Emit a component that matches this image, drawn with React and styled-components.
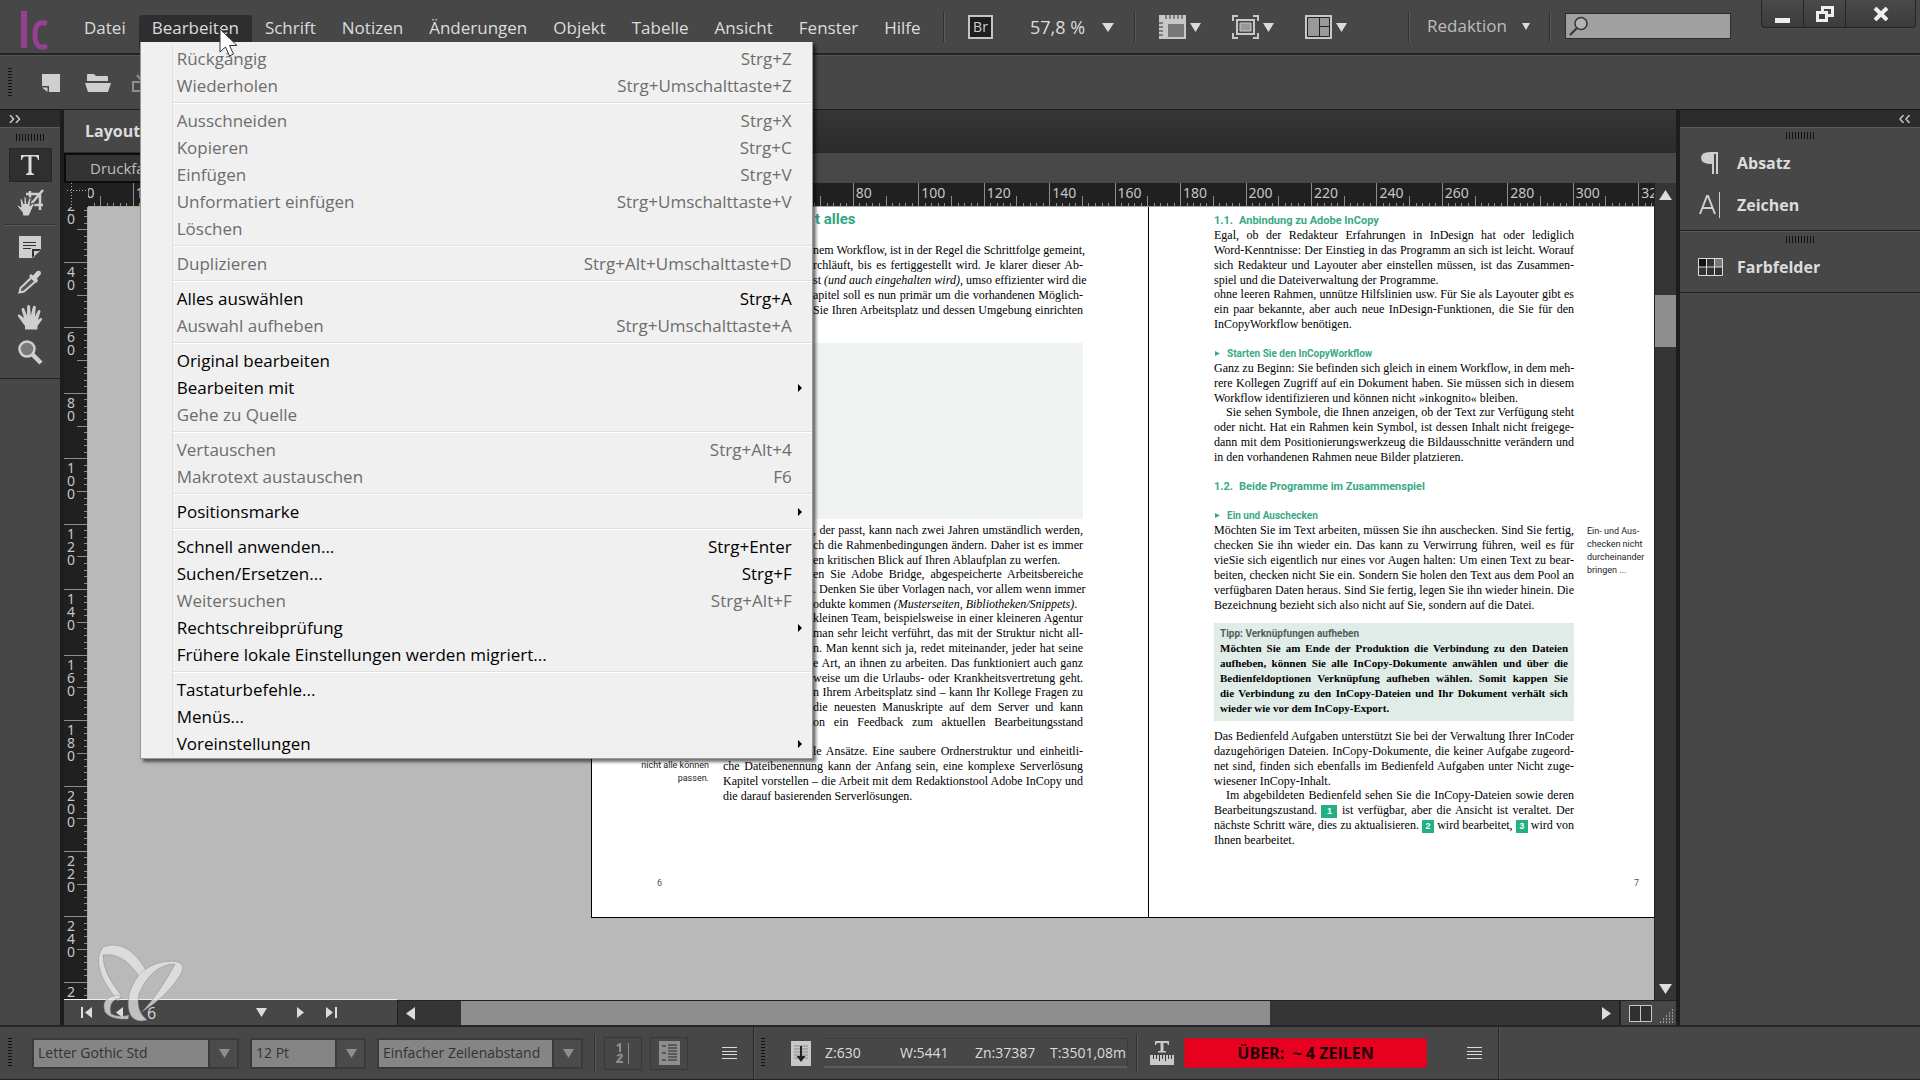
import { Fragment } from 'react';
import styled, { createGlobalStyle } from 'styled-components';

const GlobalStyle = createGlobalStyle`
  * {
    box-sizing: border-box;
  }

  body {
    margin: 0;
    overflow: hidden;
    background: #474747;
    color: #dcdcdc;
    font: 16px/24px 'Open Sans', 'Noto Sans', sans-serif;
  }

  button, input, select {
    font: inherit;
    color: inherit;
    background: none;
    border: none;
    border-radius: 0;
    padding: 0;
    margin: 0;
  }

  svg {
    display: block;
    flex: none;
  }

  p, h1, h2, h3 {
    margin: 0;
  }
`;

/* ---------- window ---------- */

const Window = styled.div`
  height: 100vh;
  display: flex;
  flex-direction: column;
`;

const Separator = styled.div`
  width: 2px;
  height: ${({ $height }) => $height || 30}px;
  background: linear-gradient(to right, #303030 50%, #5a5a5a 50%);
`;

const Grip = styled.div`
  width: 4px;
  height: 30px;
  background: repeating-linear-gradient(#111 0 1px, transparent 1px 3px);
`;

const PanelGrip = styled.div`
  width: 28px;
  height: 7px;
  margin: 0 auto;
  background: repeating-linear-gradient(to right, #111 0 1px, transparent 1px 3px);
`;

const IconButton = styled.button`
  display: flex;
  align-items: center;
  gap: ${({ $gap }) => $gap || 0}px;
`;

/* ---------- top bar ---------- */

const TopBar = styled.header`
  height: 55px;
  flex: none;
  display: flex;
  align-items: flex-start;
  border-bottom: 2px solid #242424;
  position: relative;
  z-index: 2;
  font-size: 17px;
`;

const Logo = styled.div`
  padding: 9px 0 0 19px;
  width: 71px;
`;

const MenuNav = styled.nav`
  display: flex;
  padding-top: 15px;
  flex: 0 0 872px;
`;

const MenuItem = styled.div`
  position: relative;
`;

const MenuButton = styled.button`
  height: 36px;
  padding: 0 13px 10px;
  line-height: 26px;
  white-space: nowrap;
  border-radius: 3px;
  background: ${({ $open }) => ($open ? '#2e2e2e' : 'none')};
`;

const Dropdown = styled.div`
  position: absolute;
  top: 27px;
  left: 1px;
  width: 673px;
  padding: 3px 0 1px;
  background: #f0f0f0;
  border: 1px solid #979797;
  border-width: 0 1px 1px;
  box-shadow: 3px 3px 3px rgba(0, 0, 0, 0.55);
  color: #000;
`;

const MenuGroup = styled.div`
  margin-left: 31px;
  border-left: 1px solid #e0e0e0;

  & + & {
    padding-top: 8px;
    background: linear-gradient(#e0e0e0 0 1px, #fff 1px 2px, transparent 2px) 0 3px no-repeat;
  }
`;

const MenuRow = styled.button`
  display: flex;
  justify-content: space-between;
  align-items: center;
  width: 100%;
  height: 27px;
  padding: 0 ${({ $sub }) => ($sub ? 10 : 20)}px 0 4px;
  color: ${({ disabled }) => (disabled ? '#6d6d6d' : '#000')};
`;

const Cursor = styled.div`
  position: absolute;
  left: 219px;
  top: 28px;
`;

const TopTools = styled.div`
  flex: 1;
  display: flex;
  align-items: center;
  height: 54px;
`;

const BridgeButton = styled.button`
  width: 25px;
  height: 24px;
  margin: 0 37px 0 23px;
  border: 2px solid #c4c4c4;
  background: #1e1e1e;
  color: #d0d0d0;
  font-size: 14px;
  line-height: 20px;
`;

const ZoomButton = styled.button`
  display: flex;
  align-items: center;
  justify-content: space-between;
  width: 84px;
  margin-right: 20px;
  font-size: 18px;
  white-space: nowrap;
`;

const ViewTools = styled.div`
  display: flex;
  gap: 31px;
  width: 272px;
  padding-left: 23px;
`;

const WorkspaceButton = styled.button`
  display: flex;
  align-items: center;
  justify-content: space-between;
  width: 103px;
  margin: 0 19px 2px 17px;
  color: #bdbdbd;
`;

const SearchField = styled.label`
  display: flex;
  align-items: center;
  width: 166px;
  height: 26px;
  margin: 0 0 2px 14px;
  padding: 0 3px;
  background: #a0a0a0;
  border: 1px solid #2c2c2c;

  input {
    flex: 1;
    min-width: 0;
    color: #222;
  }
`;

const WindowButtons = styled.div`
  display: flex;
  align-self: flex-start;
  width: 155px;
  height: 28px;
  margin: 0 4px 0 auto;
  border: 1px solid #262626;
  border-top: none;
  border-radius: 0 0 4px 4px;
  background: linear-gradient(#4a4a4a, #3b3b3b);
`;

const WindowButton = styled.button`
  flex: ${({ $grow }) => $grow || 42};
  display: grid;
  place-items: center;

  & + & {
    border-left: 1px solid #262626;
  }
`;

/* ---------- control bar ---------- */

const ControlBar = styled.div`
  height: 54px;
  flex: none;
  display: flex;
  align-items: center;
  padding-left: 8px;
  border-top: 1px solid #555;

  ${Grip} {
    margin-right: 30px;
  }

  svg {
    margin-right: 25px;
  }
`;

/* ---------- docks ---------- */

const Workspace = styled.main`
  flex: 1;
  min-height: 0;
  display: flex;
  background: #1d1d1d;
`;

const Dock = styled.aside`
  flex: 0 0 ${({ $width }) => $width}px;
  background: #474747;
  border-top: 1px solid #1a1a1a;
`;

const DockHeader = styled.div`
  display: flex;
  justify-content: ${({ $end }) => ($end ? 'flex-end' : 'flex-start')};
  align-items: center;
  height: 17px;
  padding: 0 9px;
  background: #2c2c2c;
`;

const Toolbox = styled.div`
  display: flex;
  flex-direction: column;
  align-items: center;
  gap: 7px;
  padding: 6px 0 12px;
  border-top: 1px solid #5a5a5a;
  border-bottom: 1px solid #222;
`;

const ToolButton = styled.button`
  width: 43px;
  height: ${({ $active }) => ($active ? 34 : 28)}px;
  display: grid;
  place-items: center;
  background: ${({ $active }) => ($active ? '#2f2f2f' : 'none')};
  border: ${({ $active }) => ($active ? '1px solid #262626' : 'none')};
`;

const ToolRule = styled.div`
  width: 52px;
  height: 2px;
  background: linear-gradient(#333 50%, #5a5a5a 50%);
`;

const PanelGroup = styled.section`
  padding: 4px 0;
  border-top: 1px solid #5a5a5a;
  border-bottom: 1px solid #1f1f1f;
`;

const PanelList = styled.div`
  display: flex;
  flex-direction: column;
  padding-top: 3px;
`;

const PanelButton = styled.button`
  display: flex;
  align-items: center;
  height: 42px;
  padding-left: 18px;
  font-weight: 700;

  svg {
    width: 26px;
    margin-right: 13px;
  }
`;

/* ---------- document area ---------- */

const DocumentArea = styled.section`
  flex: 1;
  min-width: 0;
  display: flex;
  flex-direction: column;
  margin: 1px 4px 0;
  background: #474747;
`;

const TabStrip = styled.div`
  flex: 0 0 43px;
  background: linear-gradient(#363636, #2b2b2b);
`;

const DocTab = styled.button`
  width: 300px;
  height: 42px;
  padding-left: 21px;
  text-align: left;
  font-weight: 700;
  background: #474747;
`;

const ViewStrip = styled.div`
  flex: 0 0 30px;
  background: #484848;
`;

const ViewTab = styled.button`
  width: 200px;
  height: 30px;
  padding-left: 24px;
  text-align: left;
  font-size: 15px;
  color: #bdbdbd;
  background: #333;
  border: 2px solid #0c0c0c;
`;

const Viewport = styled.div`
  flex: 1;
  min-height: 0;
  display: grid;
  grid-template: 24px minmax(0, 1fr) 25px / 24px minmax(0, 1fr) 22px;
`;

const RulerBox = styled.div`
  background: #202020;
  overflow: hidden;
  border: solid #a8a8a8;
  border-width: ${({ $vertical }) => ($vertical ? '0 1px 0 0' : '0 0 1px 0')};

  text {
    font: 14px 'Noto Sans', sans-serif;
    fill: #c6c6c6;
  }
`;

const RulerCorner = styled.div`
  background: #202020;

  svg {
    margin-left: 3px;
  }
`;

const Canvas = styled.div`
  display: flex;
  padding: 0 0 82px 503px;
  overflow: hidden;
  background: #b9b9b9;
`;

const Page = styled.article`
  flex: ${({ $fill }) => ($fill ? '1 0 0' : '0 0 557px')};
  min-width: 0;
  display: flex;
  flex-direction: column;
  padding-top: ${({ $fill }) => ($fill ? 6 : 2)}px;
  background: #fff;
  border: solid #000;
  border-width: 0 0 1px 1px;
  color: #000;
  font: 12px/15px 'Liberation Serif', serif;
  overflow: hidden;
`;

const Section = styled.div`
  display: grid;
  grid-template-columns: ${({ $mirrored }) => ($mirrored ? '65px 360px 1fr' : '117px 360px')};
  column-gap: ${({ $mirrored }) => ($mirrored ? 0 : 14)}px;
`;

const Column = styled.div`
  grid-column: 2;
`;

const Para = styled.p`
  padding-left: ${({ $tail }) => ($tail ? 90 : 0)}px;

  & + & {
    margin-top: -1px;
  }
`;

const Line = styled.span`
  display: block;
  white-space: nowrap;
  text-align: justify;
  text-align-last: ${({ $end }) => ($end ? 'left' : 'justify')};
  padding-left: ${({ $indent }) => ($indent ? 12 : 0)}px;
`;

const Gap = styled.div`
  height: ${({ $size }) => $size || 14}px;
`;

const Title = styled.h1`
  padding-left: 92px;
  color: #2fa883;
  font: 700 15px/20px Roboto, 'Liberation Sans', sans-serif;
`;

const Heading = styled.h2`
  display: flex;
  align-items: center;
  gap: 6px;
  color: #3aa986;
  font: 700 ${({ $sub }) => ($sub ? 10 : 11)}px/15px Roboto, 'Liberation Sans', sans-serif;
`;

const Marker = styled.span`
  flex: 0 0 19px;
`;

const PictureFrame = styled.div`
  height: 176px;
  background: #eff4f2;
`;

const Note = styled.aside`
  color: #222;
  font: 9px/13px Roboto, 'Liberation Sans', sans-serif;
  white-space: nowrap;
  padding: ${({ $mirrored }) => ($mirrored ? '2px 0 0 13px' : '0')};
  text-align: ${({ $mirrored }) => ($mirrored ? 'left' : 'right')};
`;

const Tip = styled.div`
  padding: 3px 6px 5px;
  background: #e0ece7;
  font-size: 11px;
  font-weight: 700;

  h3 {
    color: #50605a;
    font: 700 10px/15px Roboto, 'Liberation Sans', sans-serif;
  }
`;

const Tag = styled.span`
  display: inline-block;
  width: ${({ $wide }) => ($wide ? 16 : 12)}px;
  height: 13px;
  background: #22b183;
  color: #fff;
  font: 700 9px/13px 'Liberation Sans', sans-serif;
  text-align: center;
  text-align-last: center;
`;

const PageNumber = styled.footer`
  margin-top: auto;
  padding: 0 15px 27px 65px;
  color: #555;
  font: 9px/13px Roboto, 'Liberation Sans', sans-serif;
  text-align: ${({ $right }) => ($right ? 'right' : 'left')};
`;

const VerticalScroll = styled.div`
  grid-row: 1 / 3;
  grid-column: 3;
  display: flex;
  flex-direction: column;
  align-items: center;
  justify-content: space-between;
  padding: 7px 0 6px;
  background: #353535;
  border-left: 1px solid #222;
`;

const VerticalThumb = styled.div`
  width: 21px;
  height: 52px;
  margin: 95px 0 auto;
  background: #8e8e8e;
`;

const NavRow = styled.div`
  grid-column: 1 / 4;
  display: flex;
  align-items: stretch;
  border-top: 1px solid #222;
`;

const PageNav = styled.div`
  flex: 0 0 333px;
  display: flex;
  align-items: center;
  padding-left: 17px;
  border-top: 1px solid #eee;
  margin-top: -2px;
  background: #474747;
`;

const PageField = styled.input`
  width: 109px;
  margin-left: 21px;
`;

const HorizontalScroll = styled.div`
  flex: 1;
  display: flex;
  align-items: center;
  background: #353535;
  border: 1px solid #222;
  border-width: 0 2px 0 1px;
  padding: 0 8px;
`;

const HorizontalThumb = styled.div`
  flex: 0 0 809px;
  align-self: stretch;
  margin: 0 auto 0 46px;
  background: #8e8e8e;
`;

const SplitButton = styled.button`
  padding: 0 8px;
`;

/* ---------- bottom bar ---------- */

const BottomBar = styled.footer`
  height: 55px;
  flex: none;
  display: flex;
  align-items: center;
  padding-left: 8px;
  border-top: 2px solid #262626;
  border-bottom: 1px solid #222;
  font-size: 14px;

  & > ${Grip} {
    margin-right: 20px;
  }
`;

const Spacer = styled.div`
  width: ${({ $width }) => $width}px;
`;

const SelectBox = styled.label`
  position: relative;
  width: ${({ $width }) => $width}px;
  margin-right: 11px;
  border: 2px solid #3a3a3a;

  select {
    width: 100%;
    height: 27px;
    padding-left: 4px;
    appearance: none;
    color: #333;
    background: linear-gradient(to left, #4b4b4b 27px, #3a3a3a 27px 29px, #858585 29px);
  }

  svg {
    position: absolute;
    right: 7px;
    top: 9px;
    pointer-events: none;
  }
`;

const ToggleButton = styled.button`
  width: 38px;
  height: 33px;
  margin-left: 8px;
  display: grid;
  place-items: center;
  border: 1px solid #383838;
`;

const BarDivider = styled.div`
  align-self: stretch;
  width: 2px;
  background: linear-gradient(to right, #262626 50%, #555 50%);
`;

const Metrics = styled.dl`
  display: grid;
  grid-template-columns: 75px 75px 75px 75px;
  width: 304px;
  height: 30px;
  margin: 0 8px 0 13px;
  padding-left: 1px;
  line-height: 28px;
  white-space: nowrap;
  overflow: hidden;
  border: solid #3c3c3c;
  border-width: 1px 1px 0 0;
  border-bottom: 2px solid #5c5c5c;

  div {
    display: flex;
  }

  dd {
    margin: 0;
  }
`;

const CopyfitStatus = styled.output`
  width: 243px;
  height: 30px;
  margin: 0 40px 0 10px;
  background: #e8001f;
  border: 1px solid #b3152a;
  color: #1c0508;
  font-size: 16px;
  font-weight: 700;
  line-height: 28px;
  text-align: center;
  white-space: pre;
`;

const Watermark = styled.div`
  position: absolute;
  left: 97px;
  bottom: 58px;
  pointer-events: none;
`;

/* ---------- icons ---------- */

const Triangle = ({ dir = 'down', w = 11, h = 9 }) => {
  const points = {
    down: `0,0 ${w},0 ${w / 2},${h}`,
    up: `0,${h} ${w},${h} ${w / 2},0`,
    left: `${w},0 ${w},${h} 0,${h / 2}`,
    right: `0,0 0,${h} ${w},${h / 2}`,
  };
  return (
    <svg width={w} height={h}>
      <polygon points={points[dir]} fill="#dcdcdc" />
    </svg>
  );
};

const Hamburger = () => (
  <svg width="15" height="12" stroke="#dcdcdc">
    <path d="M0 .5h15M0 4.5h15M0 7.5h15M0 11.5h15" />
  </svg>
);

const HandShape = ({ size = 26 }) => (
  <svg width={size} height={size} viewBox="0 0 26 26">
    <path
      d="M8 25.500V22L5 18 .8 12q-.3-2 1.700-1.500L7 14 4.500 5.500q.5-2 2.500-1.200l3 7.200L10.200 2q1.300-1.800 2.800 0l.8 9.500L16 2.500q1.700-1.500 2.800.3L18 12.500l3-6q2-1.200 2.500.8L21 16l2.500-2q2.300-.2 1.500 1.800L20.500 22v3.500z"
      fill="#cfcfcf"
    />
  </svg>
);

/* ---------- rulers ---------- */

const STEP = 65.45; // px per 20 mm

function Ruler({ vertical, origin, from, to }) {
  const marks = [];
  for (let i = from; i <= to; i++) marks.push(i);
  const tick = (pos, len) =>
    vertical ? `M${23 - len} ${pos}h${len}` : `M${pos} ${23 - len}v${len}`;

  return (
    <RulerBox $vertical={vertical}>
      <svg width="100%" height="100%" shapeRendering="crispEdges">
        {marks.map((i) => {
          const pos = origin + i * STEP;
          const label = String(Math.abs(i * 20));
          const path = [0, 1, 2, 3, 4, 5, 6, 7, 8, 9]
            .map((n) => tick(Math.round(pos + (n * STEP) / 10) + 0.5, n === 0 ? 23 : n === 5 ? 10 : 3))
            .join('');
          return (
            <Fragment key={i}>
              <path d={path} stroke="#8c8c8c" />
              {vertical
                ? label.split('').map((digit, n) => (
                    <text key={n} x="3" y={pos + 15 + n * 13}>{digit}</text>
                  ))
                : <text x={pos + 3} y="15">{label}</text>}
            </Fragment>
          );
        })}
      </svg>
    </RulerBox>
  );
}

/* ---------- data ---------- */

const MENUS = ['Datei', 'Bearbeiten', 'Schrift', 'Notizen', 'Änderungen', 'Objekt', 'Tabelle', 'Ansicht', 'Fenster', 'Hilfe'];

const EDIT_MENU = [
  [
    { label: 'Rückgängig', keys: 'Strg+Z', off: true },
    { label: 'Wiederholen', keys: 'Strg+Umschalttaste+Z', off: true },
  ],
  [
    { label: 'Ausschneiden', keys: 'Strg+X', off: true },
    { label: 'Kopieren', keys: 'Strg+C', off: true },
    { label: 'Einfügen', keys: 'Strg+V', off: true },
    { label: 'Unformatiert einfügen', keys: 'Strg+Umschalttaste+V', off: true },
    { label: 'Löschen', off: true },
  ],
  [{ label: 'Duplizieren', keys: 'Strg+Alt+Umschalttaste+D', off: true }],
  [
    { label: 'Alles auswählen', keys: 'Strg+A' },
    { label: 'Auswahl aufheben', keys: 'Strg+Umschalttaste+A', off: true },
  ],
  [
    { label: 'Original bearbeiten' },
    { label: 'Bearbeiten mit', sub: true },
    { label: 'Gehe zu Quelle', off: true },
  ],
  [
    { label: 'Vertauschen', keys: 'Strg+Alt+4', off: true },
    { label: 'Makrotext austauschen', keys: 'F6', off: true },
  ],
  [{ label: 'Positionsmarke', sub: true }],
  [
    { label: 'Schnell anwenden...', keys: 'Strg+Enter' },
    { label: 'Suchen/Ersetzen...', keys: 'Strg+F' },
    { label: 'Weitersuchen', keys: 'Strg+Alt+F', off: true },
    { label: 'Rechtschreibprüfung', sub: true },
    { label: 'Frühere lokale Einstellungen werden migriert...' },
  ],
  [
    { label: 'Tastaturbefehle...' },
    { label: 'Menüs...' },
    { label: 'Voreinstellungen', sub: true },
  ],
];

/* ---------- parts ---------- */

function Text({ lines, tail, indent, open }) {
  return (
    <Para $tail={tail}>
      {lines.map((line, i) => (
        <Line key={i} $end={!open && i === lines.length - 1} $indent={indent && i === 0}>{line}</Line>
      ))}
    </Para>
  );
}

function EditMenu() {
  return (
    <Dropdown role="menu">
      {EDIT_MENU.map((group, i) => (
        <MenuGroup key={i}>
          {group.map(({ label, keys, sub, off }) => (
            <MenuRow key={label} role="menuitem" disabled={off} $sub={sub}>
              <span>{label}</span>
              {keys && <span>{keys}</span>}
              {sub && <svg width="4" height="8"><path d="M0 0l4 4-4 4z" /></svg>}
            </MenuRow>
          ))}
        </MenuGroup>
      ))}
    </Dropdown>
  );
}

function Header() {
  return (
    <TopBar>
      <Logo>
        <svg width="30" height="42" fill="none" stroke="#96408f">
          <path d="M5 2v37" strokeWidth="6" />
          <path d="M28 14.500q-12-4-12 11.500t12 11" strokeWidth="5" />
        </svg>
      </Logo>
      <MenuNav>
        {MENUS.map((name) => (
          <MenuItem key={name}>
            <MenuButton $open={name === 'Bearbeiten'}>{name}</MenuButton>
            {name === 'Bearbeiten' && <EditMenu />}
          </MenuItem>
        ))}
      </MenuNav>
      <TopTools>
        <Separator />
        <BridgeButton>Br</BridgeButton>
        <ZoomButton>57,8 % <Triangle w={12} /></ZoomButton>
        <Separator />
        <ViewTools>
          <IconButton $gap={4} aria-label="Anzeigeoptionen">
            <svg width="27" height="24">
              <path d="M0 0h27v8H8v16H0z" fill="#c8c8c8" />
              <path d="M8 8h18v15H8z" fill="#777" stroke="#c8c8c8" strokeWidth="2" />
              <path d="M7 0v4M11 0v4M15 0v4M19 0v4M23 0v4M0 8h4M0 12h4M0 16h4M0 20h4" stroke="#333" />
            </svg>
            <Triangle />
          </IconButton>
          <IconButton $gap={4} aria-label="Bildschirmmodus">
            <svg width="27" height="24" fill="none" stroke="#c8c8c8">
              <path d="M1 6V1h5M21 1h5v5M26 18v5h-5M6 23H1v-5" strokeWidth="2" />
              <path d="M5 5h17v14H5z" strokeWidth="2" />
              <path d="M8 8h11v8H8z" fill="#999" />
            </svg>
            <Triangle />
          </IconButton>
          <IconButton $gap={4} aria-label="Dokumente anordnen">
            <svg width="27" height="24">
              <path d="M0 0h27v24H0z" fill="#c8c8c8" />
              <path d="M2.500 2.500h22v19h-22zM14.500 2.500v19M14.500 11.500h10" fill="#999" stroke="#222" />
            </svg>
            <Triangle />
          </IconButton>
        </ViewTools>
        <Separator />
        <WorkspaceButton>Redaktion <Triangle w={8} h={7} /></WorkspaceButton>
        <Separator />
        <SearchField aria-label="Suche">
          <svg width="20" height="20" fill="none" stroke="#333" strokeWidth="2">
            <circle cx="12" cy="7.500" r="6" fill="#b4b4b4" strokeWidth="1.500" />
            <path d="M8 12l-7 7" />
          </svg>
          <input type="text" />
        </SearchField>
        <WindowButtons>
          <WindowButton aria-label="Minimieren">
            <svg width="15" height="20"><path d="M0 14h15v5H0z" fill="#eee" /></svg>
          </WindowButton>
          <WindowButton aria-label="Wiederherstellen">
            <svg width="18" height="16" fill="none" stroke="#eee" strokeWidth="3">
              <path d="M6.500 6V1.500h10v8H12M1.500 6.500h9v8h-9z" />
            </svg>
          </WindowButton>
          <WindowButton $grow={70} aria-label="Schließen">
            <svg width="16" height="14"><path d="M2 1l12 12M14 1L2 13" stroke="#eee" strokeWidth="4" /></svg>
          </WindowButton>
        </WindowButtons>
      </TopTools>
      <Cursor>
        <svg width="20" height="30">
          <path d="M1 1v23l5.500-5 4 9 4-2-4-8.500H18z" fill="#fff" stroke="#333" />
        </svg>
      </Cursor>
    </TopBar>
  );
}

function Tools() {
  return (
    <Dock $width={60}>
      <DockHeader>
        <svg width="12" height="8" fill="none" stroke="#c8c8c8" strokeWidth="1.500">
          <path d="M1 0l3.500 4L1 8M7 0l3.500 4L7 8" />
        </svg>
      </DockHeader>
      <Toolbox>
        <PanelGrip />
        <ToolButton $active aria-label="Text">
          <svg width="18" height="20" fill="#dcdcdc">
            <path d="M0 0h18v5h-1q-.5-3.500-3-3.500h-3.500V17q0 1.500 2.500 1.700V20H5v-1.300q2.500-.2 2.500-1.700V1.500H4Q1.500 1.500 1 5H0z" />
          </svg>
        </ToolButton>
        <ToolButton aria-label="Position">
          <svg width="28" height="28" viewBox="0 0 28 28">
            <path d="M14 2v14h13M10 5h14v16M27 1L16 14" fill="none" stroke="#cfcfcf" strokeWidth="2.500" />
            <path d="M7 27l-1-4-5-6q0-2 4 1L4 10q1-1 2 0l2 5V8q1-1 2 0l1 7 2-6q1-1 2 0l-1 8 3-3q2 0 1 2l-5 11z" fill="#cfcfcf" stroke="#474747" />
          </svg>
        </ToolButton>
        <ToolRule />
        <ToolButton aria-label="Notiz">
          <svg width="22" height="22">
            <path d="M0 0h22v13l-8 9H0z" fill="#cfcfcf" />
            <path d="M4 6.500h13M4 9.500h13M4 12.500h8" stroke="#333" />
            <path d="M13 22v-9h9z" fill="#333" />
            <path d="M15 20v-5h6z" fill="#cfcfcf" />
          </svg>
        </ToolButton>
        <ToolButton aria-label="Pipette">
          <svg width="24" height="24">
            <path d="M13.500 7.500l4 4L6 21.500l-4.500 1L2.500 18z" fill="#555" stroke="#cfcfcf" strokeWidth="2" />
            <path d="M11 6l2-2 2 1.500 4-4.500q4-1.500 4 3l-4 4.500 1 2.500-2 2z" fill="#cfcfcf" />
          </svg>
        </ToolButton>
        <ToolButton aria-label="Hand"><HandShape /></ToolButton>
        <ToolButton aria-label="Zoom">
          <svg width="25" height="25">
            <path d="M14 14l9 9" stroke="#cfcfcf" strokeWidth="4.500" />
            <circle cx="9" cy="9" r="7.500" fill="#7a7a7a" stroke="#cfcfcf" strokeWidth="2.500" />
          </svg>
        </ToolButton>
      </Toolbox>
    </Dock>
  );
}

function LeftPage() {
  return (
    <Page>
      <Section>
        <Column>
          <Title>t alles</Title>
          <Gap />
          <Text
            tail
            open
            lines={[
              'nem Workflow, ist in der Regel die Schrittfolge gemeint,',
              'rchläuft, bis es fertiggestellt wird. Je klarer dieser Ab-',
              <>st <em>(und auch eingehalten wird)</em>, umso effizienter wird die</>,
              'apitel soll es nun primär um die vorhandenen Möglich-',
              'Sie Ihren Arbeitsplatz und dessen Umgebung einrichten',
            ]}
          />
          <Gap $size={25} />
          <PictureFrame />
          <Gap $size={4} />
          <Text
            tail
            lines={[
              ', der passt, kann nach zwei Jahren umständlich werden,',
              'ch die Rahmenbedingungen ändern. Daher ist es immer',
              'en kritischen Blick auf Ihren Ablaufplan zu werfen.',
            ]}
          />
          <Text
            tail
            lines={[
              'en Sie Adobe Bridge, abgespeicherte Arbeitsbereiche',
              '. Denken Sie über Vorlagen nach, vor allem wenn immer',
              <>odukte kommen <em>(Musterseiten, Bibliotheken/Snippets)</em>.</>,
            ]}
          />
          <Text
            tail
            open
            lines={[
              'kleinen Team, beispielsweise in einer kleineren Agentur',
              'man sehr leicht verführt, das mit der Struktur nicht all-',
              'n. Man kennt sich ja, redet miteinander, jeder hat seine',
              'e Art, an ihnen zu arbeiten. Das funktioniert auch ganz',
              'weise um die Urlaubs- oder Krankheitsvertretung geht.',
            ]}
          />
          <Text
            tail
            open
            lines={[
              'n Ihrem Arbeitsplatz sind – kann Ihr Kollege Fragen zu',
              'die neuesten Manuskripte auf dem Server und kann',
              'on ein Feedback zum aktuellen Bearbeitungsstand',
            ]}
          />
          <Gap />
          <Text tail open lines={['le Ansätze. Eine saubere Ordnerstruktur und einheitli-']} />
        </Column>
      </Section>
      <Section>
        <Note>nicht alle können<br />passen.</Note>
        <Column>
          <Text
            lines={[
              'che Dateibenennung kann der Anfang sein, eine komplexe Serverlösung',
              'Kapitel vorstellen – die Arbeit mit dem Redaktionstool Adobe InCopy und',
              'die darauf basierenden Serverlösungen.',
            ]}
          />
        </Column>
      </Section>
      <PageNumber>6</PageNumber>
    </Page>
  );
}

function SubHeading({ children }) {
  return (
    <Heading as="h3" $sub>
      <svg width="7" height="5"><path d="M1 0l5 2.500L1 5z" fill="#3aa986" /></svg>
      {children}
    </Heading>
  );
}

function RightPage() {
  return (
    <Page $fill>
      <Section $mirrored>
        <Column>
          <Heading><Marker>1.1.</Marker>Anbindung zu Adobe InCopy</Heading>
          <Text
            lines={[
              'Egal, ob der Redakteur Erfahrungen in InDesign hat oder lediglich',
              'Word-Kenntnisse: Der Einstieg in das Programm an sich ist leicht. Worauf',
              'sich Redakteur und Layouter aber einstellen müssen, ist das Zusammen-',
              'spiel und die Dateiverwaltung der Programme.',
            ]}
          />
          <Text
            lines={[
              'ohne leeren Rahmen, unnütze Hilfslinien usw. Für Sie als Layouter gibt es',
              'ein paar bekannte, aber auch neue InDesign-Funktionen, die Sie für den',
              'InCopyWorkflow benötigen.',
            ]}
          />
          <Gap />
          <SubHeading>Starten Sie den InCopyWorkflow</SubHeading>
          <Text
            lines={[
              'Ganz zu Beginn: Sie befinden sich gleich in einem Workflow, in dem meh-',
              'rere Kollegen Zugriff auf ein Dokument haben. Sie müssen sich in diesem',
              'Workflow identifizieren und können nicht »inkognito« bleiben.',
            ]}
          />
          <Text
            indent
            lines={[
              'Sie sehen Symbole, die Ihnen anzeigen, ob der Text zur Verfügung steht',
              'oder nicht. Hat ein Rahmen kein Symbol, ist dessen Inhalt nicht freigege-',
              'dann mit dem Positionierungswerkzeug die Bildausschnitte verändern und',
              'in den vorhandenen Rahmen neue Bilder platzieren.',
            ]}
          />
          <Gap />
          <Heading><Marker>1.2.</Marker>Beide Programme im Zusammenspiel</Heading>
          <Gap />
          <SubHeading>Ein und Auschecken</SubHeading>
        </Column>
      </Section>
      <Section $mirrored>
        <Column>
          <Text
            lines={[
              'Möchten Sie im Text arbeiten, müssen Sie ihn auschecken. Sind Sie fertig,',
              'checken Sie ihn wieder ein. Das kann zu Verwirrung führen, weil es für',
              'vieSie sich eigentlich nur eines vor Augen halten: Um einen Text zu bear-',
              'beiten, checken nicht Sie ein. Sondern Sie holen den Text aus dem Pool an',
              'verfügbaren Daten heraus. Sind Sie fertig, legen Sie ihn wieder hinein. Die',
              'Bezeichnung bezieht sich also nicht auf Sie, sondern auf die Datei.',
            ]}
          />
          <Gap $size={10} />
          <Tip>
            <h3>Tipp: Verknüpfungen aufheben</h3>
            <Text
              lines={[
                'Möchten Sie am Ende der Produktion die Verbindung zu den Dateien',
                'aufheben, können Sie alle InCopy-Dokumente anwählen und über die',
                'Bedienfeldoptionen Verknüpfung aufheben wählen. Somit kappen Sie',
                'die Verbindung zu den InCopy-Dateien und Ihr Dokument verhält sich',
                'wieder wie vor dem InCopy-Export.',
              ]}
            />
          </Tip>
          <Gap $size={8} />
          <Text
            lines={[
              'Das Bedienfeld Aufgaben unterstützt Sie bei der Verwaltung Ihrer InCoder',
              'dazugehörigen Dateien. InCopy-Dokumente, die keiner Aufgabe zugeord-',
              'net sind, finden sich ebenfalls im Bedienfeld Aufgaben unter Nicht zuge-',
              'wiesener InCopy-Inhalt.',
            ]}
          />
          <Text
            indent
            lines={[
              'Im abgebildeten Bedienfeld sehen Sie die InCopy-Dateien sowie deren',
              <>Bearbeitungszustand. <Tag $wide>1</Tag> ist verfügbar, aber die Ansicht ist veraltet. Der</>,
              <>nächste Schritt wäre, dies zu aktualisieren. <Tag>2</Tag> wird bearbeitet, <Tag>3</Tag> wird von</>,
              'Ihnen bearbeitet.',
            ]}
          />
        </Column>
        <Note $mirrored>Ein- und Aus-<br />checken nicht<br />durcheinander<br />bringen ...</Note>
      </Section>
      <PageNumber $right>7</PageNumber>
    </Page>
  );
}

function DocumentWindow() {
  return (
    <DocumentArea>
      <TabStrip><DocTab>Layout_InCopy</DocTab></TabStrip>
      <ViewStrip><ViewTab>Druckfahne</ViewTab></ViewStrip>
      <Viewport>
        <RulerCorner>
          <svg width="20" height="24" stroke="#aaa" strokeDasharray="1 2">
            <path d="M4.500 0v24M0 7.500h20" />
          </svg>
        </RulerCorner>
        <Ruler origin={503} from={-8} to={17} />
        <VerticalScroll>
          <Triangle dir="up" w={13} h={10} />
          <VerticalThumb />
          <Triangle dir="down" w={13} h={10} />
        </VerticalScroll>
        <Ruler vertical origin={-76} from={1} to={13} />
        <Canvas>
          <LeftPage />
          <RightPage />
        </Canvas>
        <NavRow>
          <PageNav>
            <IconButton aria-label="Erste Seite">
              <svg width="12" height="11" fill="#dcdcdc"><path d="M0 0h2v11H0zM11 0v11L4 5.500z" /></svg>
            </IconButton>
            <IconButton aria-label="Vorherige Seite">
              <svg width="33" height="11" fill="#dcdcdc"><path d="M30 0v11l-7-5.500z" /></svg>
            </IconButton>
            <PageField defaultValue="6" aria-label="Seite" />
            <Triangle />
            <IconButton aria-label="Nächste Seite">
              <svg width="39" height="11" fill="#dcdcdc"><path d="M30 0v11l7-5.500z" /></svg>
            </IconButton>
            <IconButton aria-label="Letzte Seite">
              <svg width="32" height="11" fill="#dcdcdc"><path d="M20 0v11l7-5.500zM29 0h2v11h-2z" /></svg>
            </IconButton>
          </PageNav>
          <HorizontalScroll>
            <Triangle dir="left" w={9} h={13} />
            <HorizontalThumb />
            <Triangle dir="right" w={9} h={13} />
          </HorizontalScroll>
          <SplitButton aria-label="Fenster teilen">
            <svg width="23" height="17" fill="#303030" stroke="#c8c8c8"><path d="M.5.5h11v16H.5zM11.500.5h11v16h-11z" /></svg>
          </SplitButton>
          <svg width="16" height="24" viewBox="5 0 16 24" stroke="#999" strokeWidth="2" strokeDasharray="1 2">
            <path d="M17 9h2M14 12h5M11 15h9M8 18h12M5 21h15" />
          </svg>
        </NavRow>
      </Viewport>
    </DocumentArea>
  );
}

function Panels() {
  return (
    <Dock $width={240}>
      <DockHeader $end>
        <svg width="12" height="8" fill="none" stroke="#c8c8c8" strokeWidth="1.500">
          <path d="M4.500 0L1 4l3.500 4M10.500 0L7 4l3.500 4" />
        </svg>
      </DockHeader>
      <PanelGroup>
        <PanelGrip />
        <PanelList>
          <PanelButton>
            <svg width="26" height="24" fill="#cfcfcf"><path d="M20 1v22h-2V3h-2v20h-2V13q-11 0-11-6t9-6z" /></svg>
            Absatz
          </PanelButton>
          <PanelButton>
            <svg width="26" height="26" fill="none" stroke="#cfcfcf" strokeWidth="2">
              <path d="M2 22L9 4h1l7 18M5 16h9" />
              <path d="M21.500 0v26" strokeWidth="1" />
            </svg>
            Zeichen
          </PanelButton>
        </PanelList>
      </PanelGroup>
      <PanelGroup>
        <PanelGrip />
        <PanelList>
          <PanelButton>
            <svg width="26" height="18">
              <path d="M.5.5h24v17H.5z" fill="#333" />
              <path d="M17 1h7v8h-7z" fill="#777" />
              <path d="M1 1h7v8H1z" fill="#111" />
              <path d="M.5.5h24v17H.5zM8.500 0v18M16.500 0v18M0 9h25" fill="none" stroke="#dcdcdc" />
            </svg>
            Farbfelder
          </PanelButton>
        </PanelList>
      </PanelGroup>
    </Dock>
  );
}

function Select({ label, value, width }) {
  return (
    <SelectBox $width={width}>
      <select aria-label={label} defaultValue={value}>
        <option>{value}</option>
      </select>
      <svg width="11" height="9"><path d="M0 0h11L5.500 9z" fill="#8e8e8e" /></svg>
    </SelectBox>
  );
}

function StatusBar() {
  return (
    <BottomBar>
      <Grip />
      <Select label="Schriftart" value="Letter Gothic Std" width={207} />
      <Select label="Schriftgrad" value="12 Pt" width={116} />
      <Select label="Zeilenabstand" value="Einfacher Zeilenabstand" width={206} />
      <Separator $height={38} />
      <ToggleButton aria-label="Zeilennummern">
        <svg width="14" height="21" fill="none" stroke="#8e8e8e" strokeWidth="2">
          <path d="M1 3l3-2v8M1 13q5-3 5 0L1 19h6" />
          <path d="M12.500 0v21" strokeWidth="1" />
        </svg>
      </ToggleButton>
      <ToggleButton aria-label="Absatzformate einblenden">
        <svg width="21" height="24">
          <path d="M0 0h21v24H0z" fill="#8e8e8e" />
          <path d="M3 5h4M3 12h4M3 19h4M9 4h9M9 7h9M9 10h9M9 13h9M9 16h9M9 19h9" stroke="#4a4a4a" strokeWidth="1.500" />
        </svg>
      </ToggleButton>
      <Spacer $width={34} />
      <IconButton aria-label="Menü"><Hamburger /></IconButton>
      <Spacer $width={16} />
      <BarDivider />
      <Spacer $width={6} />
      <Grip />
      <Spacer $width={6} />
      <svg width="20" height="25">
        <path d="M0 0h20v25H0z" fill="#c8c8c8" />
        <path d="M3 5h14M3 8h14M3 11h14M3 14h14M3 17h14" stroke="#888" />
        <path d="M10 5v14" stroke="#222" strokeWidth="2" />
        <path d="M5.500 15h9L10 21z" fill="#222" />
      </svg>
      <Metrics>
        <div><dt>Z:</dt><dd>630</dd></div>
        <div><dt>W:</dt><dd>5441</dd></div>
        <div><dt>Zn:</dt><dd>37387</dd></div>
        <div><dt>T:</dt><dd>3501,08mm</dd></div>
      </Metrics>
      <Separator $height={38} />
      <Spacer $width={12} />
      <svg width="24" height="24" fill="#c8c8c8">
        <path d="M5 0h14v4h-1q0-2-2-2h-2.500v8H16v1.500H8V10h2.500V2H8Q6 2 6 4H5zM0 14h24v10H0z" />
        <path d="M3.500 14v4M6.500 14v4M9.500 14v6M12.500 14v4M15.500 14v6M18.500 14v4M21.500 14v4" stroke="#333" />
      </svg>
      <CopyfitStatus>ÜBER:  ~ 4 ZEILEN</CopyfitStatus>
      <IconButton aria-label="Menü"><Hamburger /></IconButton>
      <Spacer $width={16} />
      <BarDivider />
    </BottomBar>
  );
}

export default function App() {
  return (
    <Window>
      <GlobalStyle />
      <Header />
      <ControlBar>
        <Grip />
        <svg width="18" height="18" fill="#cfcfcf">
          <path d="M0 0h18v18H7v-6H0z" />
          <path d="M0 13.500h5.500V18z" />
        </svg>
        <svg width="26" height="18" fill="#cfcfcf">
          <path d="M2 7V1q0-1 1-1h6l2 2h11q1 0 1 1v4zM0 9h26l-3 9H3z" />
        </svg>
        <svg width="24" height="18" overflow="visible" fill="none" stroke="#8e8e8e" strokeWidth="2">
          <path d="M-3 8h24v9H-3zM1 1l5 6" />
        </svg>
      </ControlBar>
      <Workspace>
        <Tools />
        <DocumentWindow />
        <Panels />
      </Workspace>
      <StatusBar />
      <Watermark>
        <svg width="88" height="78" viewBox="0 0 88 78" fill="#e8e8e8" fillOpacity="0.75" fillRule="evenodd" stroke="#888" strokeWidth="0.5">
          <path d="M6 3Q30-6 49 26L43 34Q27 8 6 11 6 30 25 52L21 57Q-8 22 6 3z" />
          <path d="M44 77Q28 76 32 50 42 18 75 17 92 18 82 33 70 52 45 68 62 50 78 20 55 20 42 50 38 66 50 76z" />
          <path d="M25 53Q10 56 14 70 22 74 32 71L31 75Q14 76 8 68 3 53 21 51z" />
        </svg>
      </Watermark>
    </Window>
  );
}
